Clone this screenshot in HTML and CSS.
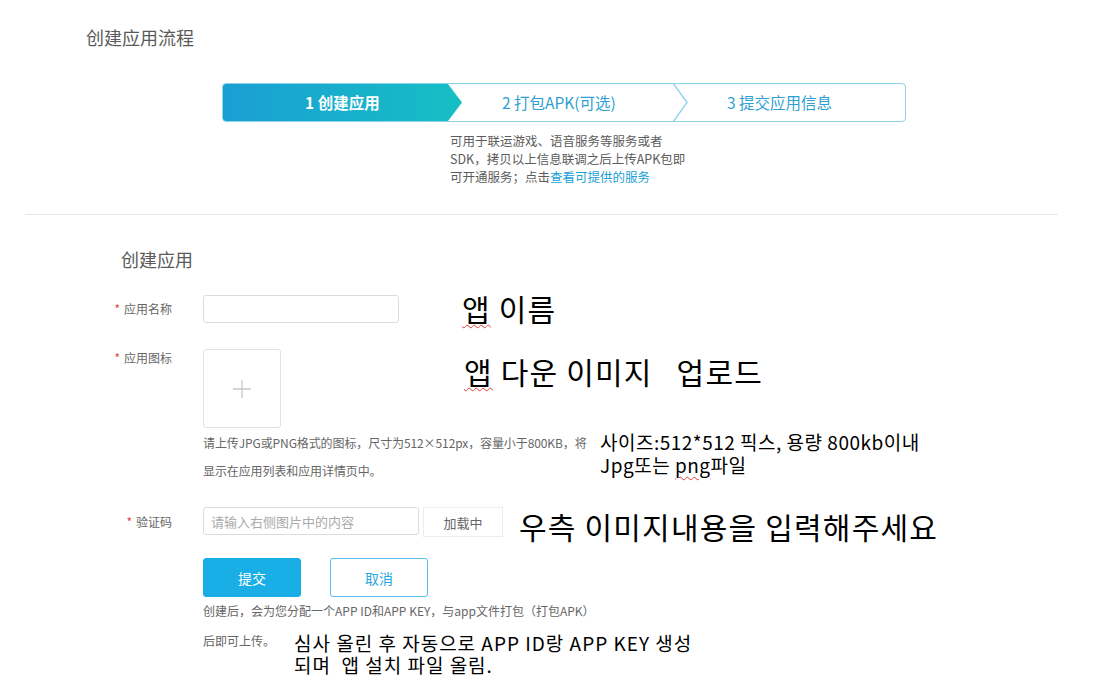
FILE: index.html
```html
<!DOCTYPE html>
<html lang="zh">
<head>
<meta charset="utf-8">
<title>创建应用流程</title>
<link rel="stylesheet" href="styles.css">
</head>
<body>
<div class="page">
  <header class="flow-head">
    <h1 class="flow-title">创建应用流程</h1>
    <div class="steps">
      <div class="step step-active">1 创建应用</div>
      <div class="step step-2">2 打包APK(可选)</div>
      <svg class="step-sep" width="17" height="37" viewBox="0 0 17 37"><path d="M1 -1 L15 18.5 L1 38" fill="none" stroke="#8fd3ea" stroke-width="1.4"/></svg>
      <div class="step step-3">3 提交应用信息</div>
    </div>
    <p class="steps-desc">可用于联运游戏、语音服务等服务或者<br>SDK，拷贝以上信息联调之后上传APK包即<br>可开通服务；点击<a class="link" href="#">查看可提供的服务</a></p>
  </header>

  <hr class="divider">

  <section class="create">
    <h2 class="create-title">创建应用</h2>
    <form class="form">
      <div class="row row-name">
        <label class="label"><span class="req">*</span>应用名称</label>
        <input class="input input-name" type="text">
      </div>
      <div class="row row-icon">
        <label class="label label-top"><span class="req">*</span>应用图标</label>
        <div class="icon-col">
          <div class="upload">
            <svg width="20" height="20" viewBox="0 0 20 20"><path d="M10 1 V19 M1 10 H19" stroke="#c8c8c8" stroke-width="1.3" fill="none"/></svg>
          </div>
          <div class="help">
            <span class="line">请上传JPG或PNG格式的图标，尺寸为512×512px，容量小于800KB，将</span>
            <span class="line">显示在应用列表和应用详情页中。</span>
          </div>
        </div>
      </div>
      <div class="row row-captcha">
        <label class="label label-captcha"><span class="req">*</span>验证码</label>
        <input class="input input-captcha" type="text" placeholder="请输入右侧图片中的内容">
        <button class="btn-load" type="button">加载中</button>
      </div>
      <div class="row row-actions">
        <button class="btn btn-primary" type="button">提交</button>
        <button class="btn btn-ghost" type="button">取消</button>
      </div>
      <div class="note">
        <span class="line">创建后，会为您分配一个APP ID和APP KEY，与app文件打包（打包APK）</span>
        <span class="line">后即可上传。</span>
      </div>
    </form>
  </section>

  <div class="anno anno-big anno-1"><span class="typo">앱</span> 이름</div>
  <div class="anno anno-big anno-2"><span class="typo">앱</span> 다운 이미지 <span class="gap">업로드</span></div>
  <div class="anno anno-small anno-3">사이즈:512*512 픽스, 용량 800kb이내<br>Jpg또는 <span class="typo">png</span>파일</div>
  <div class="anno anno-big anno-4">우측 이미지내용을 입력해주세요</div>
  <div class="anno anno-small anno-5">심사 올린 후 자동으로 APP ID랑 APP KEY 생성<br>되며  앱 설치 파일 올림.</div>
</div>
</body>
</html>
```
FILE: styles.css
```css
* { box-sizing: border-box; }
html, body { margin: 0; padding: 0; background: #fff; }
body {
  font-family: "Microsoft YaHei", "Noto Sans CJK SC", "Noto Sans", sans-serif;
  color: #666;
}
.page { position: relative; width: 1094px; min-height: 696px; }

.flow-head { padding-top: 25px; }
.flow-title {
  margin: 0 0 34px 86px;
  font-size: 18px; line-height: 24px; font-weight: normal; color: #5a5a5a;
}
.steps {
  display: flex;
  margin-left: 222px;
  width: 684px; height: 39px;
  border: 1px solid #8fd3ea;
  border-radius: 4px;
  overflow: hidden;
}
.step {
  height: 37px;
  line-height: 36px;
  font-size: 15.5px;
  color: #2f9fd3;
  white-space: nowrap;
}
.step-active {
  width: 239px;
  padding-left: 82px;
  color: #fff;
  font-weight: bold;
  background: linear-gradient(90deg, #1a9fd4 0%, #17b5c9 70%, #16bfc4 100%);
  clip-path: polygon(0 0, calc(100% - 14px) 0, 100% 50%, calc(100% - 14px) 100%, 0 100%);
}
.step-2 { width: 210px; padding-left: 40px; }
.step-sep { display: block; flex: none; }
.step-3 { flex: 1; padding-left: 38px; }

.steps-desc {
  margin: 10px 0 0 450px;
  width: max-content;
  font-size: 12.5px; line-height: 18px; color: #5c5c5c;
}
.link { color: #1a9fd8; text-decoration: none; }

.divider {
  margin: 28px 36px 0 25px;
  border: 0; border-top: 1px solid #e6e6e6; height: 0;
}

.create { padding-top: 32px; }
.create-title {
  margin: 0 0 24px 121px;
  font-size: 18px; line-height: 24px; font-weight: normal; color: #5a5a5a;
}
.form { margin: 0; padding-left: 82px; }
.row { display: flex; align-items: flex-start; }
.label {
  flex: none;
  width: 90px; margin-right: 31px;
  text-align: right;
  font-size: 12px; line-height: 28px; color: #666;
}
.req { color: #e0443c; margin-right: 4px; font-size: 12px; }
.label-top { line-height: 18px; }
.label-captcha { line-height: 30px; }
.input {
  height: 28px;
  border: 1px solid #dcdcdc;
  border-radius: 3px;
  padding: 0 7px;
  font-family: inherit;
  font-size: 13px;
  color: #333;
  outline: none;
}
.input::placeholder { color: #aaa; }
.input-name { width: 196px; }

.row-icon { margin-top: 26px; }
.upload {
  width: 78px; height: 79px;
  border: 1px solid #e2e2e2;
  border-radius: 3px;
  display: flex; align-items: center; justify-content: center;
}
.line { display: block; width: max-content; }
.help {
  margin-top: 1px;
  font-size: 12px; line-height: 28px; color: #666; white-space: nowrap;
  letter-spacing: -0.1px;
}

.row-captcha { margin-top: 22px; }
.input-captcha { width: 216px; }
.btn-load {
  margin-left: 4px;
  width: 80px; height: 30px;
  border: 1px solid #ececec;
  background: #fff;
  font-family: inherit; font-size: 13px; color: #666;
}

.row-actions { margin-top: 21px; padding-left: 121px; gap: 29px; }
.btn {
  width: 98px; height: 39px;
  border-radius: 3px;
  font-family: inherit; font-size: 14px;
}
.btn-primary { background: #1aaee6; border: 1px solid #1aaee6; color: #fff; }
.btn-ghost { background: #fff; border: 1px solid #55c1ea; color: #2aa6dd; }

.note {
  margin: -1px 0 0 121px;
  font-size: 12px; line-height: 30px; color: #666; white-space: nowrap;
}

.anno {
  position: absolute;
  font-family: "Noto Sans CJK KR", "Malgun Gothic", sans-serif;
  color: #000;
  white-space: pre;
}
.anno-big { font-size: 30px; line-height: 35px; letter-spacing: 1.2px; }
.anno-small { font-size: 19px; line-height: 23px; letter-spacing: 0.5px; }
.anno-1 { left: 462px; top: 291px; }
.anno-2 { left: 464px; top: 354px; }
.anno-3 { left: 600px; top: 430px; }
.anno-4 { left: 519px; top: 509px; }
.anno-5 { left: 294px; top: 632px; line-height: 22px; letter-spacing: 1px; }
.gap { margin-left: 16px; }
.typo {
  text-decoration: underline wavy #e03a3a;
  text-decoration-thickness: 1px;
  text-underline-offset: 3px;
}
```
